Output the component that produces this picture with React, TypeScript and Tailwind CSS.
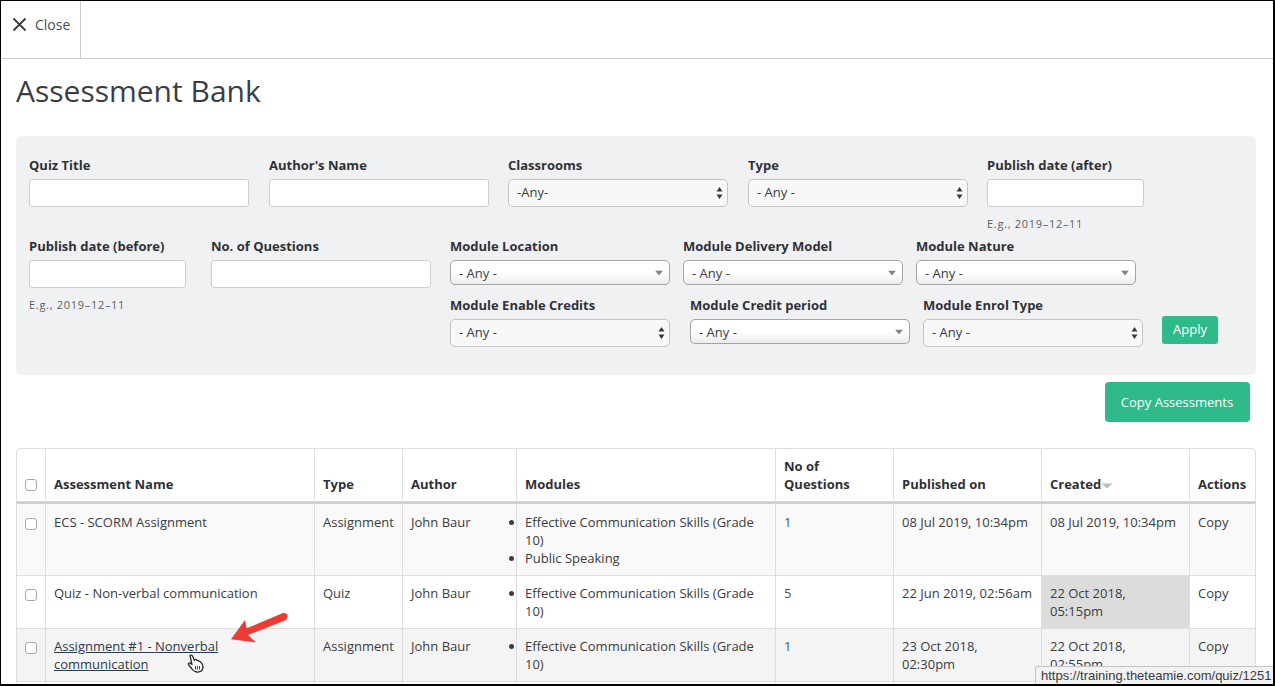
import React from "react";

const font = { fontFamily: '"Open Sans", sans-serif' };

function Label({ children }: { children: React.ReactNode }) {
  return <label className="block h-[14px] text-[13px] leading-[14px] font-bold text-[#2f3137] whitespace-nowrap">{children}</label>;
}

function TextField({ label, hint, w }: { label: string; hint?: boolean; w: string }) {
  return (
    <div className={w}>
      <Label>{label}</Label>
      <input className="block mt-[7px] w-full h-[28px] bg-white border border-[#cdcdcd] rounded-[3px]" />
      {hint && <p className="mt-[9px] text-[11px] leading-[16px] text-[#5c5e63] tracking-[0.7px]">E.g., 2019–12–11</p>}
    </div>
  );
}

function Updown() {
  return (
    <svg className="absolute right-[4px] top-1/2 -translate-y-1/2" width="7" height="13" viewBox="0 0 7 13">
      <path d="M3.5 0.5 L6.5 5 H0.5 Z M0.5 8 H6.5 L3.5 12.5 Z" fill="#3a3a3a" />
    </svg>
  );
}

function Caret() {
  return (
    <svg className="absolute right-[6px] top-1/2 -translate-y-1/2" width="8" height="5" viewBox="0 0 8 5">
      <path d="M0 0 H8 L4 5 Z" fill="#838383" />
    </svg>
  );
}

function Select({ label, w, text = "- Any -", flat }: { label: string; w: string; text?: string; flat?: boolean }) {
  return (
    <div className={w}>
      <Label>{label}</Label>
      {flat ? (
        <div className="relative mt-[7px] h-[25px] rounded-[5px] border border-[#a3a3a3] bg-gradient-to-b from-white from-50% to-[#ececec] flex items-center pl-[8px] pt-[3px] text-[13px] text-[#3a3c42]">
          {text}
          <Caret />
        </div>
      ) : (
        <div className="relative mt-[7px] h-[28px] rounded-[5px] border border-[#c4c4c4] bg-[#f8f8f8] flex items-center pl-[8px] text-[13px] text-[#3a3c42]">
          {text}
          <Updown />
        </div>
      )}
    </div>
  );
}

const Cell = ({ children, className = "" }: { children?: React.ReactNode; className?: string }) => (
  <td className={`border-r border-b border-[#dedede] align-top px-[8px] ${className}`}>{children}</td>
);

const Check = () => <input type="checkbox" className="appearance-none block w-[12px] h-[12px] bg-white border border-[#a9a9a9] rounded-[3px] mx-auto" />;

const Head = ({ children, className = "" }: { children?: React.ReactNode; className?: string }) => (
  <th className={`border-r border-t border-[#dedede] border-b-[3px] border-b-[#d0d0d0] align-bottom text-left px-[8px] pb-[8px] font-bold text-[13px] leading-[18px] text-[#2f3137] ${className}`}>{children}</th>
);

const rows = [
  { name: "ECS - SCORM Assignment", type: "Assignment", mods: ["Effective Communication Skills (Grade 10)", "Public Speaking"], n: "1", pub: "08 Jul 2019, 10:34pm", cre: "08 Jul 2019, 10:34pm", bg: "bg-[#f9f9f9]", h: "h-[72px]", pt: "pt-[9px]", cpt: "pt-[14px]" },
  { name: "Quiz - Non-verbal communication", type: "Quiz", mods: ["Effective Communication Skills (Grade 10)"], n: "5", pub: "22 Jun 2019, 02:56am", cre: "22 Oct 2018, 05:15pm", bg: "bg-white", h: "h-[53px]", hi: true, pt: "pt-[8px]", cpt: "pt-[13px]" },
  { name: "Assignment #1 - Nonverbal communication", type: "Assignment", mods: ["Effective Communication Skills (Grade 10)"], n: "1", pub: "23 Oct 2018, 02:30pm", cre: "22 Oct 2018, 02:55pm", bg: "bg-[#f4f4f4]", h: "h-[53px]", link: true, pt: "pt-[8px]", cpt: "pt-[13px]" },
  { name: "", type: "", mods: [], n: "", pub: "", cre: "", bg: "bg-white", h: "h-[40px]", empty: true, pt: "pt-[8px]", cpt: "pt-[13px]" },
];

export default function App() {
  return (
    <div style={font} className="relative w-[1275px] h-[686px] overflow-hidden bg-white border-l border-t border-b-2 border-r-2 border-black text-[#3a3c42]">
      <header className="h-[58px] border-b border-[#cccccc] flex">
        <button className="w-[80px] h-full border-r border-[#cccccc] flex items-center pb-[11px] pl-[11px] gap-[8px] text-[14px] text-[#4a4c52]">
          <svg width="15" height="15" viewBox="0 0 15 15" fill="none" stroke="#3c3e44" strokeWidth="1.9"><path d="M1.5 1.5 L13.5 13.5 M13.5 1.5 L1.5 13.5" /></svg>
          Close
        </button>
      </header>

      <main className="px-[15px]">
        <h1 className="mt-[12px] h-[40px] text-[30px] leading-[40px] text-[#3b3d43]">Assessment Bank</h1>

        <section className="mt-[25px] h-[239px] w-[1240px] bg-[#f0f1f3] rounded-[6px] pl-[13px] pt-[22px]">
          <div className="flex h-[80px]">
            <TextField label="Quiz Title" w="w-[220px] mr-[20px]" />
            <TextField label="Author's Name" w="w-[220px] mr-[19px]" />
            <Select label="Classrooms" text="-Any-" w="w-[220px] mr-[20px]" />
            <Select label="Type" w="w-[220px] mr-[19px]" />
            <TextField label="Publish date (after)" hint w="w-[157px]" />
          </div>
          <div className="flex mt-[1px]">
            <TextField label="Publish date (before)" hint w="w-[157px] mr-[25px]" />
            <TextField label="No. of Questions" w="w-[220px] mr-[19px]" />
            <div>
              <div className="flex">
                <Select label="Module Location" flat w="w-[220px] mr-[13px]" />
                <Select label="Module Delivery Model" flat w="w-[220px] mr-[13px]" />
                <Select label="Module Nature" flat w="w-[220px]" />
              </div>
              <div className="flex items-start mt-[13px]">
                <Select label="Module Enable Credits" w="w-[220px] mr-[20px]" />
                <Select label="Module Credit period" flat w="w-[220px] mr-[13px]" />
                <Select label="Module Enrol Type" w="w-[220px] mr-[19px]" />
                <button className="mt-[18px] w-[56px] h-[28px] bg-[#2fba8a] rounded-[3px] text-white text-[13px]">Apply</button>
              </div>
            </div>
          </div>
        </section>

        <div className="flex justify-end w-[1234px] mt-[7px]">
          <button className="w-[145px] h-[40px] pt-[2px] pr-[1px] bg-[#2fba8a] rounded-[4px] text-white text-[13px]">Copy Assessments</button>
        </div>

        <div className="mt-[26px] w-[1240px]">
          <table className="w-[1240px] table-fixed border-separate border-spacing-0 text-[13px] leading-[18px]">
            <colgroup>
              <col className="w-[30px]" /><col className="w-[269px]" /><col className="w-[88px]" /><col className="w-[114px]" />
              <col className="w-[259px]" /><col className="w-[118px]" /><col className="w-[148px]" /><col className="w-[148px]" /><col className="w-[66px]" />
            </colgroup>
            <thead>
              <tr className="h-[56px]">
                <Head className="!pb-[10px] !px-0 border-l rounded-tl-[5px]"><Check /></Head>
                <Head>Assessment Name</Head>
                <Head>Type</Head>
                <Head>Author</Head>
                <Head>Modules</Head>
                <Head>No of Questions</Head>
                <Head>Published on</Head>
                <Head>
                  <span className="inline-flex items-center">Created
                    <svg width="12" height="6" viewBox="0 0 12 6" className="mt-[3px]"><path d="M0.5 0.5 H11.5 L6 5.5 Z" fill="#b9b9b9" /></svg>
                  </span>
                </Head>
                <Head className="rounded-tr-[5px]">Actions</Head>
              </tr>
            </thead>
            <tbody>
              {rows.map((r, i) => (
                <tr key={i} className={`${r.bg} ${r.h}`}>
                  <Cell className={`!px-0 border-l ${r.cpt}`}>{!r.empty && <Check />}</Cell>
                  <Cell className={r.pt}>{r.link ? <a className="underline text-[#2b3a4a]">{r.name}</a> : r.name}</Cell>
                  <Cell className={r.pt}>{r.type}</Cell>
                  <Cell className={r.pt}>{!r.empty && "John Baur"}</Cell>
                  <Cell className={r.pt}>
                    {r.mods.length > 0 && (
                      <ul className="list-disc">
                        {r.mods.map((m) => <li key={m}>{m}</li>)}
                      </ul>
                    )}
                  </Cell>
                  <Cell className={`${r.pt} text-[#3f5566]`}>{r.n}</Cell>
                  <Cell className={r.pt}>{r.pub}</Cell>
                  <Cell className={`${r.pt} ${r.hi ? "!bg-[#dcdcdc]" : ""}`}>{r.cre}</Cell>
                  <Cell className={r.pt}>{!r.empty && "Copy"}</Cell>
                </tr>
              ))}
            </tbody>
          </table>
        </div>
      </main>

      {/* annotation arrow */}
      <svg className="absolute left-[228px] top-[611px]" width="62" height="33" viewBox="0 0 62 33">
        <path d="M2 27.3 L16 8 L17.7 16.3 L54 1 Q58 0.5 58.6 4 Q58.6 7 56 8.6 L19 23 L27 30.6 Z" fill="#ef3b36" />
      </svg>
      {/* hand cursor */}
      <svg className="absolute left-[186px] top-[653px]" width="18" height="19" viewBox="0 0 18 19" fill="#fff" stroke="#2a2a2a" strokeWidth="1.3" strokeLinejoin="round">
        <path d="M3 1.5 Q4.5 0.5 5.5 2 L7.5 6.5 L8 5.5 Q9.5 5 10 6.5 Q11.5 6 12 7.5 Q13.5 7 14 8.5 Q16 10 16 13 L15 16.5 Q12.5 18.5 9.5 18 Q6.5 17.5 5 15 L1.5 10.5 Q1 9 3 9 L5 10.5 Z" />
        <path d="M8.5 12 V15.5 M10.5 12 V15.5 M12.5 12 V15.5" fill="none" strokeWidth="0.9" />
      </svg>
      {/* browser status bubble */}
      <div className="absolute left-[1034px] top-[665px] h-[20px] w-[241px] pl-[5px] bg-[#f2f2f2] border-l border-t border-[#c4c4c4] rounded-tl-[3px] text-[13px] leading-[18px] text-[#3a3a3a] whitespace-nowrap" style={{ fontFamily: '"Liberation Sans", sans-serif' }}>
        https://training.theteamie.com/quiz/1251
      </div>
    </div>
  );
}
